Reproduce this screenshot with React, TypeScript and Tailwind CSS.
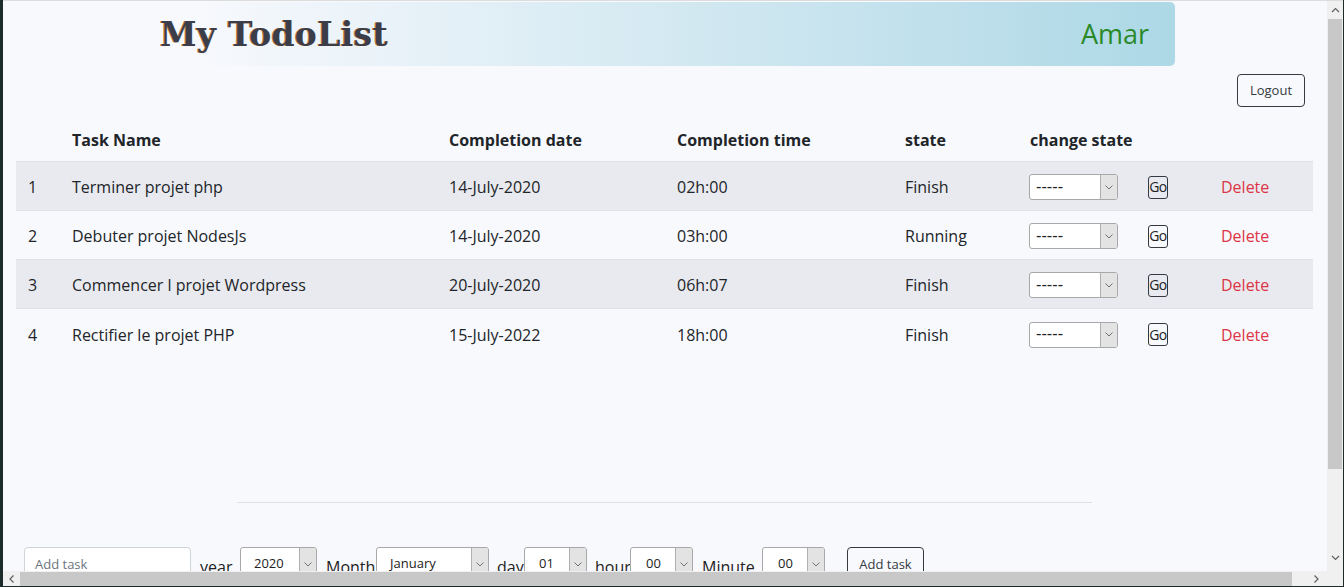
const tasks = [
  { id: 1, name: 'Terminer projet php', date: '14-July-2020', time: '02h:00', state: 'Finish' },
  { id: 2, name: 'Debuter projet NodesJs', date: '14-July-2020', time: '03h:00', state: 'Running' },
  { id: 3, name: 'Commencer l projet Wordpress', date: '20-July-2020', time: '06h:07', state: 'Finish' },
  { id: 4, name: 'Rectifier le projet PHP', date: '15-July-2022', time: '18h:00', state: 'Finish' },
];

const cols = 'grid grid-cols-[44px_377px_228px_228px_125px_118px_73px_104px]';

function Chevron({ dir = 'down' }: { dir?: 'down' | 'up' | 'left' | 'right' }) {
  const rot = { down: 0, up: 180, left: 90, right: -90 }[dir];
  return (
    <svg width="9" height="6" viewBox="0 0 9 6" style={{ transform: `rotate(${rot}deg)` }}>
      <path d="M1 1 L4.5 4.5 L8 1" fill="none" stroke="#606060" strokeWidth="1.2" />
    </svg>
  );
}

function Select({ value, w, h = 26, text = 'text-[15px]', pad = 'pl-[6px]' }: { value: string; w: string; h?: number; text?: string; pad?: string }) {
  return (
    <div className={`${w} flex bg-white border border-[#a8a8a8] rounded-[3px] overflow-hidden`} style={{ height: h }}>
      <div className={`flex-1 flex items-center ${pad} ${text} text-[#222]`}>{value}</div>
      <div className="w-[17px] bg-[#e3e3e3] border-l border-[#b0b0b0] flex items-center justify-center">
        <svg width="8" height="5" viewBox="0 0 8 5">
          <path d="M0.5 0.5 L4 4 L7.5 0.5" fill="none" stroke="#707070" strokeWidth="1" />
        </svg>
      </div>
    </div>
  );
}

function Label({ children, w }: { children: string; w: string }) {
  return <span className={`${w} shrink-0 mt-[8px] text-[16px] text-[#222] whitespace-nowrap`}>{children}</span>;
}

export default function App() {
  return (
    <div className="w-[1344px] h-[587px] flex bg-[#1e2b2b] overflow-hidden" style={{ fontFamily: '"Open Sans", "Noto Sans", sans-serif' }}>
      <div className="w-[3px]" />
      <div className="w-[1340px] flex flex-col">
        <div className="h-px bg-[#dcdcdc]" />
        <div className="flex h-[570px]">
          {/* page */}
          <div className="w-[1324px] bg-[#f8f9fd] overflow-hidden text-[#212529]">
            <div className="ml-[152px] mt-px w-[1020px] h-[64px] rounded-r-[5px] bg-gradient-to-r from-[#f8f9fd] from-[3%] to-[#add8e6] flex items-center justify-between pl-[5px] pr-[26px]">
              <span
                className="text-[33px] font-bold text-[#3b3d48] tracking-[0.3px] mt-[1px]"
                style={{ fontFamily: '"DejaVu Serif", serif', textShadow: '-1px 0 #c07a3a, 1px 1px #f4f4f4' }}
              >
                My TodoList
              </span>
              <span className="text-[27px] text-[#2a8a2a] mt-[1px]">Amar</span>
            </div>

            <div className="flex justify-end pr-[22px] mt-[8px]">
              <button className="w-[68px] h-[33px] border border-[#343a40] rounded-[4px] text-[13px] text-[#343a40]">Logout</button>
            </div>

            <div className="ml-[13px] mt-[10px] w-[1297px] text-[16px]">
              <div className={`${cols} h-[45px] items-center pt-[2px] font-bold border-b border-[#dee2e6]`}>
                <div />
                <div className="px-[12px]">Task Name</div>
                <div className="px-[12px]">Completion date</div>
                <div className="px-[12px]">Completion time</div>
                <div className="px-[12px]">state</div>
                <div className="px-[12px] whitespace-nowrap">change state</div>
                <div />
                <div />
              </div>
              {tasks.map((t, i) => (
                <div key={t.id} className={`${cols} h-[49px] items-center pt-[2px] ${i < tasks.length - 1 ? 'border-b border-[#dee2e6]' : ''} ${i % 2 === 0 ? 'bg-[#e9eaef]' : ''}`}>
                  <div className="px-[12px]">{t.id}</div>
                  <div className="px-[12px]">{t.name}</div>
                  <div className="px-[12px]">{t.date}</div>
                  <div className="px-[12px]">{t.time}</div>
                  <div className="px-[12px]">{t.state}</div>
                  <div className="pl-[11px]">
                    <Select value="-----" w="w-[89px]" text="text-[15px] font-['DejaVu_Sans',sans-serif]" />
                  </div>
                  <div className="px-[12px]">
                    <button className="w-[20px] h-[23px] border border-[#343a40] rounded-[3px] text-[14px] leading-none flex items-center justify-center text-[#222] tracking-[-0.5px]">Go</button>
                  </div>
                  <div className="px-[12px] text-[#dc3545]">Delete</div>
                </div>
              ))}
            </div>

            <div className="ml-[234px] mt-[144px] w-[855px] h-px bg-[#dee2e6]" />

            <div className="flex items-start mt-[44px] ml-[21px]">
              <div className="w-[167px] h-[38px] shrink-0 bg-white border border-[#ced4da] rounded-[4px] pl-[10px] pt-[7px] text-[13px] text-[#6c757d]">Add task</div>
              <div className="w-[9px] shrink-0" />
              <Label w="w-[40px]">year</Label>
              <Select value="2020" w="w-[77px] shrink-0" h={34} text="text-[13px]" pad="pl-[13px]" />
              <div className="w-[9px] shrink-0" />
              <Label w="w-[50px]">Month</Label>
              <Select value="January" w="w-[113px] shrink-0" h={34} text="text-[13px]" pad="pl-[13px]" />
              <div className="w-[8px] shrink-0" />
              <Label w="w-[27px]">day</Label>
              <Select value="01" w="w-[63px] shrink-0" h={34} text="text-[13px]" pad="pl-[14px]" />
              <div className="w-[8px] shrink-0" />
              <Label w="w-[35px]">hour</Label>
              <Select value="00" w="w-[63px] shrink-0" h={34} text="text-[13px]" pad="pl-[15px]" />
              <div className="w-[9px] shrink-0" />
              <Label w="w-[60px]">Minute</Label>
              <Select value="00" w="w-[63px] shrink-0" h={34} text="text-[13px]" pad="pl-[15px]" />
              <button className="ml-[22px] shrink-0 w-[77px] h-[36px] border border-[#343a40] rounded-[4px] text-[13px] text-[#343a40]">Add task</button>
            </div>
          </div>

          {/* vertical scrollbar */}
          <div className="w-[16px] bg-[#f0f0f0] flex flex-col">
            <div className="h-[18px] flex items-center justify-center"><Chevron dir="up" /></div>
            <div className="h-[450px] mx-px bg-[#c8c8c8]" />
            <div className="flex-1" />
            <div className="h-[18px] flex items-center justify-center mb-[4px]"><Chevron dir="down" /></div>
          </div>
        </div>

        {/* horizontal scrollbar */}
        <div className="flex h-[15px]">
          <div className="w-[1324px] bg-[#f0f0f0] flex items-center">
            <div className="w-[17px] flex items-center justify-center"><Chevron dir="left" /></div>
            <div className="w-[1272px] h-[14px] bg-[#c8c8c8]" />
            <div className="flex-1 flex items-center justify-end pr-[6px]"><Chevron dir="right" /></div>
          </div>
          <div className="w-[16px] bg-[#f0f0f0]" />
        </div>
      </div>
      <div className="w-px" />
    </div>
  );
}
